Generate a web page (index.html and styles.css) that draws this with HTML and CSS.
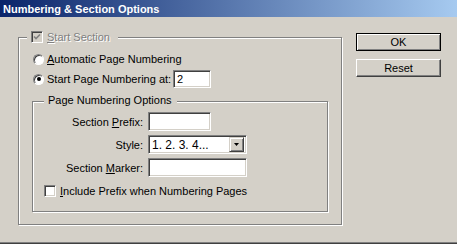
FILE: index.html
```html
<!DOCTYPE html>
<html>
<head>
<meta charset="utf-8">
<link rel="stylesheet" href="styles.css">
</head>
<body>
<div class="window">
  <div class="titlebar">Numbering &amp; Section Options</div>
  <div class="client">
    <div class="group outer">
      <div class="legend-outer">
        <span class="check disabled"><svg width="8" height="8" viewBox="0 0 8 8"><polyline points="1,3.5 3,5.5 7,1.5" fill="none" stroke="#808080" stroke-width="1.6"/></svg></span>
        <span class="disabled-text"><u>S</u>tart Section</span>
      </div>
      <div class="row first">
        <span class="radio"></span>
        <span><u>A</u>utomatic Page Numbering</span>
      </div>
      <div class="row">
        <span class="radio checked"></span>
        <span class="startlabel">Start Page Numbering at:</span>
        <span class="field num">2</span>
      </div>
      <div class="group inner">
        <div class="legend-inner">Page Numbering Options</div>
        <div class="form-row rowa">
          <span class="flabel">Section <u>P</u>refix:</span>
          <span class="field prefix"></span>
        </div>
        <div class="form-row">
          <span class="flabel">Style:</span>
          <span class="field select">
            <span class="seltext">1. 2. 3. 4...</span>
            <span class="dropbtn"><svg width="5" height="3" viewBox="0 0 5 3"><polygon points="0,0 5,0 2.5,3" fill="#000"/></svg></span>
          </span>
        </div>
        <div class="form-row">
          <span class="flabel">Section <u>M</u>arker:</span>
          <span class="field marker"></span>
        </div>
        <div class="check-row">
          <span class="check"></span>
          <span class="checklabel"><u>I</u>nclude Prefix when Numbering Pages</span>
        </div>
      </div>
    </div>
    <div class="buttons">
      <div class="btn default">OK</div>
      <div class="btn">Reset</div>
    </div>
  </div>
</div>
</body>
</html>
```
FILE: styles.css
```css
body {
  margin: 0;
}
.window {
  width: 457px;
  height: 244px;
  box-sizing: border-box;
  background: #d4d0c8;
  border-bottom: 1px solid #404040;
  box-shadow: inset 0 -1px 0 #808080;
  font: 11px "Liberation Sans", Arial, sans-serif;
  color: #000;
  overflow: hidden;
}
.titlebar {
  height: 14px;
  padding: 3px 0 0 3px;
  line-height: 13px;
  font-weight: bold;
  color: #fff;
  white-space: nowrap;
  background: linear-gradient(to right, #0a246a, #a6caf0);
}
.client {
  display: flex;
  align-items: flex-start;
  padding: 16px 0 0 18px;
}
.group {
  box-sizing: border-box;
  border: 1px solid #808080;
  box-shadow: 1px 1px 0 #fff, inset 1px 1px 0 #fff;
}
.outer {
  width: 324px;
  height: 188px;
  margin-top: 4px;
  padding-left: 13px;
}
.legend-outer {
  display: flex;
  align-items: center;
  width: max-content;
  height: 12px;
  line-height: 13px;
  margin: -7px 0 0 -5px;
  padding: 0 8px 0 4px;
  background: #d4d0c8;
}
.check {
  display: flex;
  align-items: center;
  justify-content: center;
  box-sizing: border-box;
  width: 12px;
  height: 12px;
  flex: none;
  background: #fff;
  border: 1px solid;
  border-color: #808080 #fff #fff #808080;
  box-shadow: inset 1px 1px 0 #404040, inset -1px -1px 0 #d4d0c8;
}
.check.disabled {
  background: #d4d0c8;
  margin-right: 4px;
}
.disabled-text {
  color: #808080;
  text-shadow: 1px 1px 0 #fff;
}
.row {
  display: flex;
  align-items: center;
  height: 18px;
  margin-top: 2px;
  padding-left: 1px;
  white-space: nowrap;
}
.row.first {
  margin-top: 7px;
}
.radio {
  position: relative;
  box-sizing: border-box;
  width: 11px;
  height: 11px;
  flex: none;
  margin-right: 3px;
  border-radius: 50%;
  background: #fff;
  border: 1px solid;
  border-color: #808080 #fff #fff #808080;
  box-shadow: inset 1px 1px 0 #404040;
}
.radio.checked::after {
  content: "";
  position: absolute;
  left: 2.5px;
  top: 2.5px;
  width: 4px;
  height: 4px;
  border-radius: 50%;
  background: #000;
}
.startlabel {
  width: 126px;
}
.field {
  box-sizing: border-box;
  display: flex;
  align-items: center;
  height: 19px;
  background: #fff;
  border: 1px solid;
  border-color: #808080 #fff #fff #808080;
  box-shadow: inset 1px 1px 0 #404040, inset -1px -1px 0 #d4d0c8;
}
.num {
  width: 38px;
  height: 18px;
  padding-left: 3px;
}
.inner {
  width: 296px;
  height: 111px;
  margin-top: 13px;
}
.legend-inner {
  width: max-content;
  line-height: 13px;
  margin: -8px 0 0 11px;
  padding: 0 5px 0 4px;
  background: #d4d0c8;
  white-space: nowrap;
}
.form-row {
  display: flex;
  align-items: center;
  height: 19px;
  margin-top: 4px;
}
.form-row.rowa {
  margin-top: 5px;
}
.flabel {
  width: 110px;
  margin-right: 5px;
  text-align: right;
  white-space: nowrap;
}
.prefix {
  width: 63px;
}
.marker {
  width: 99px;
}
.select {
  width: 99px;
  padding: 2px 2px 2px 0;
  justify-content: space-between;
}
.seltext {
  padding-left: 3px;
  font-size: 12px;
}
.dropbtn {
  box-sizing: border-box;
  display: flex;
  align-items: center;
  justify-content: center;
  width: 15px;
  height: 15px;
  background: #d4d0c8;
  border: 1px solid;
  border-color: #d4d0c8 #404040 #404040 #d4d0c8;
  box-shadow: inset 1px 1px 0 #fff, inset -1px -1px 0 #808080;
}
.check-row {
  display: flex;
  align-items: center;
  height: 12px;
  margin-top: 8px;
  padding-left: 11px;
  white-space: nowrap;
}
.checklabel {
  margin-left: 4px;
}
.buttons {
  display: flex;
  flex-direction: column;
  gap: 8px;
  margin-left: 14px;
}
.btn {
  display: flex;
  align-items: center;
  justify-content: center;
  box-sizing: border-box;
  width: 85px;
  height: 18px;
  background: #d4d0c8;
  border: 1px solid;
  border-color: #fff #404040 #404040 #fff;
  box-shadow: inset -1px -1px 0 #808080;
}
.btn.default {
  border-color: #000;
  box-shadow: inset 1px 1px 0 #fff, inset -1px -1px 0 #808080;
}
```
